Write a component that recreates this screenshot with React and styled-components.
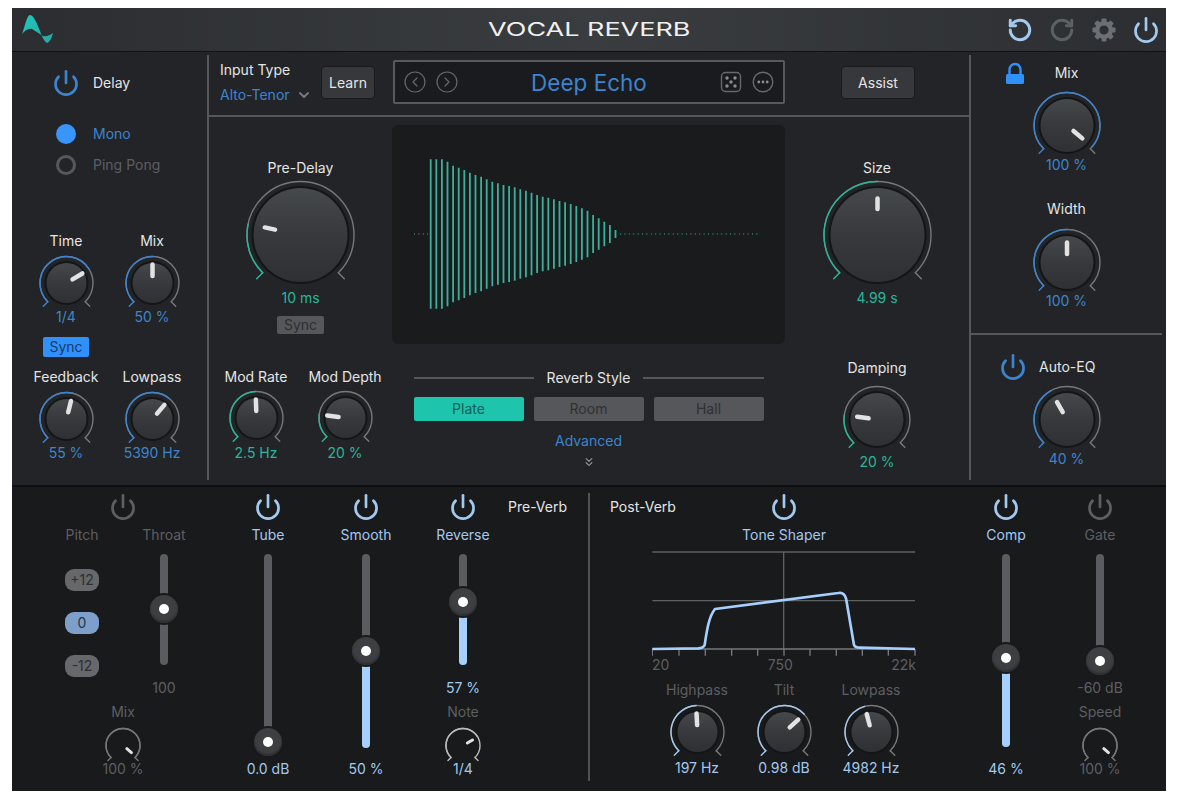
import React from 'react';
import styled, { createGlobalStyle } from 'styled-components';
import {
	ChevronDown,
	ChevronsDown,
	CircleChevronLeft,
	CircleChevronRight,
	Power,
	RotateCcw,
	RotateCw,
} from 'lucide-react';

const WHITE = '#e4e5e6';
const BLUE = '#3c84cf';
const TEAL = '#2bb59b';
const PALE = '#a3c9ee';
const DIM = '#5d5f62';
const TRACK = '#76787a';

const GlobalStyle = createGlobalStyle`
	html, body {
		margin: 0;
		background: #fff;
		font-family: Inter, "Liberation Sans", sans-serif;
	}
`;

const Plugin = styled.div`
	width: 1154px;
	height: 783px;
	margin: 8px 0 0 12px;
	display: flex;
	flex-direction: column;
	overflow: hidden;
	background: #232427;
`;

const Header = styled.header`
	height: 43px;
	flex: none;
	display: grid;
	grid-template-columns: 1fr auto 1fr;
	align-items: center;
	background: linear-gradient(90deg, #2b2d30 0%, #3a3d40 50%, #2c2e31 100%);
	border-bottom: 1px solid #101113;
`;

const Logo = styled.svg`
	width: 45px;
	height: 40px;
	margin-left: 3px;
`;

const Title = styled.h1`
	margin: 0;
	font-size: 19px;
	font-weight: 400;
	line-height: 24px;
	color: #f0f0f0;
	white-space: nowrap;
	transform: scaleX(1.42);
`;

const HeaderActions = styled.div`
	display: flex;
	justify-content: flex-end;
	gap: 14px;
	padding-right: 6px;
`;

const HeaderIcon = styled.div`
	width: 28px;
	height: 28px;
	display: flex;
	align-items: center;
	justify-content: center;
	color: ${(p) => p.$color};
`;

const TopSection = styled.section`
	height: 433px;
	flex: none;
	display: flex;
`;

const VDivider = styled.div`
	width: 2px;
	flex: none;
	margin: 3px 0 5px;
	background: #555759;
`;

const DelayPanel = styled.div`
	width: 195px;
	flex: none;
	padding-top: 17px;
	box-sizing: border-box;
`;

const ToggleRow = styled.div`
	display: flex;
	align-items: center;
	gap: ${(p) => p.$gap || 13}px;
	padding-left: ${(p) => p.$left || 40}px;
	margin-top: ${(p) => p.$mt || 0}px;
`;

const Text = styled.div`
	font-size: 14px;
	line-height: 16px;
	font-weight: 400;
	white-space: nowrap;
	color: ${(p) => p.$color || WHITE};
	margin-top: ${(p) => p.$mt || 0}px;
`;

const RadioGroup = styled.div`
	display: flex;
	flex-direction: column;
	gap: 11px;
	margin: 27px 0 0 44px;
`;

const RadioRow = styled.div`
	display: flex;
	align-items: center;
	gap: 17px;
`;

const RadioDot = styled.div`
	width: 20px;
	height: 20px;
	box-sizing: border-box;
	border-radius: 50%;
	background: ${(p) => (p.$on ? '#3a95fb' : 'transparent')};
	border: ${(p) => (p.$on ? 'none' : '3px solid #56585a')};
`;

const DelayGrid = styled.div`
	display: grid;
	grid-template-columns: 86px 86px;
	margin: 58px 0 0 11px;
`;

const Cell = styled.div`
	display: flex;
	flex-direction: column;
	align-items: center;
	margin-top: ${(p) => p.$mt || 0}px;
`;

const SyncChip = styled.div`
	width: ${(p) => (p.$on ? 46 : 47)}px;
	height: ${(p) => (p.$on ? 20 : 18)}px;
	margin-top: ${(p) => p.$mt}px;
	border-radius: 2px;
	text-align: center;
	font-size: 14px;
	line-height: ${(p) => (p.$on ? 20 : 18)}px;
	background: ${(p) => (p.$on ? '#3191fb' : '#55575a')};
	color: ${(p) => (p.$on ? '#153a68' : '#2d2f32')};
`;

const CenterPanel = styled.div`
	width: 760px;
	flex: none;
	display: flex;
	flex-direction: column;
`;

const TopBar = styled.div`
	height: 65px;
	box-sizing: border-box;
	flex: none;
	display: flex;
	align-items: center;
	padding: 0 0 3px 11px;
	border-bottom: 2px solid #555759;
`;

const InputBlock = styled.div`
	width: 101px;
	display: flex;
	flex-direction: column;
	gap: 9px;
`;

const InputValue = styled.div`
	display: flex;
	align-items: center;
	gap: 6px;
	color: #77797b;
`;

const PanelButton = styled.button`
	width: ${(p) => p.$width}px;
	height: 33px;
	flex: none;
	padding: 0;
	margin-left: ${(p) => p.$ml || 0}px;
	border: 1px solid #1a1b1d;
	border-radius: 4px;
	background: #36383b;
	color: ${WHITE};
	font-family: inherit;
	font-size: 14px;
	font-weight: 400;
`;

const PresetBox = styled.div`
	width: 392px;
	height: 44px;
	flex: none;
	box-sizing: border-box;
	margin-left: 18px;
	display: grid;
	grid-template-columns: 1fr auto 1fr;
	align-items: center;
	padding: 0 8px;
	background: #1a1b1e;
	border: 2px solid #58595b;
	border-radius: 2px;
`;

const PresetIcons = styled.div`
	display: flex;
	align-items: center;
	gap: 8px;
	color: #66686a;
	justify-content: ${(p) => (p.$end ? 'flex-end' : 'flex-start')};
`;

const PresetName = styled.div`
	font-size: 22.5px;
	line-height: 30px;
	padding-top: 2px;
	color: ${BLUE};
`;

const MainArea = styled.div`
	flex: 1;
	display: grid;
	grid-template-columns: 183px 393px 184px;
`;

const SideColumn = styled.div`
	display: flex;
	flex-direction: column;
	align-items: center;
	padding-top: 43px;
`;

const ModRow = styled.div`
	display: grid;
	grid-template-columns: 89px 89px;
	margin-top: 35px;
`;

const DisplayColumn = styled.div`
	display: flex;
	flex-direction: column;
	align-items: center;
	padding-top: 8px;
`;

const Display = styled.svg`
	width: 393px;
	height: 219px;
	flex: none;
	border-radius: 6px;
	background: #1a1b1d;
`;

const StyleHeading = styled.div`
	width: 350px;
	margin-top: 26px;
	display: flex;
	align-items: center;
	gap: 13px;
`;

const HeadingLine = styled.div`
	flex: 1;
	height: 2px;
	background: #555759;
`;

const StyleButtons = styled.div`
	width: 350px;
	margin-top: 11px;
	display: grid;
	grid-template-columns: repeat(3, 110px);
	gap: 10px;
`;

const StyleButton = styled.div`
	height: 24px;
	border-radius: 2px;
	text-align: center;
	font-size: 14px;
	line-height: 24px;
	background: ${(p) => (p.$on ? '#1ec4ac' : '#55575a')};
	color: ${(p) => (p.$on ? '#0f5f55' : '#2f3134')};
`;

const AdvancedIcon = styled.div`
	height: 14px;
	margin-top: 4px;
	color: #a2a4a6;
`;

const RightPanel = styled.div`
	width: 195px;
	flex: none;
	box-sizing: border-box;
	padding: 13px 4px 0 0;
	display: flex;
	flex-direction: column;
`;

const MixHeader = styled.div`
	display: grid;
	grid-template-columns: 1fr auto 1fr;
	grid-template-rows: 16px;
	align-items: center;
`;

const Lock = styled.svg`
	width: 18px;
	height: 22px;
	justify-self: end;
	margin-right: 31px;
`;

const HDivider = styled.div`
	height: 2px;
	margin-top: 24px;
	background: #555759;
`;

const BottomSection = styled.section`
	flex: 1;
	display: flex;
	padding-top: 6px;
	background: #191a1c;
	border-top: 2px solid #0d0e0f;
`;

const Strip = styled.div`
	width: ${(p) => p.$width || 90}px;
	flex: none;
	display: flex;
	flex-direction: column;
	align-items: center;
	margin-left: ${(p) => p.$ml || 0}px;
`;

const PowerBox = styled.div`
	width: 28px;
	height: 28px;
	flex: none;
	color: ${(p) => p.$color};
`;

const PitchRow = styled.div`
	display: grid;
	grid-template-columns: 82px 82px;
	margin-top: 6px;
`;

const PillStack = styled.div`
	display: flex;
	flex-direction: column;
	gap: 21px;
	margin-top: 26px;
`;

const Pill = styled.div`
	width: 34px;
	height: 22px;
	border-radius: 9px;
	text-align: center;
	font-size: 14px;
	line-height: 22px;
	background: ${(p) => (p.$on ? '#7d9fca' : '#66686b')};
	color: ${(p) => (p.$on ? '#2b3542' : '#2d2f31')};
`;

const SliderBody = styled.div`
	position: relative;
	width: 8px;
	height: ${(p) => p.$height}px;
	margin-top: 11px;
	border-radius: 4px;
	background: #5a5c5f;
`;

const SliderFill = styled.div`
	position: absolute;
	left: 0;
	right: 0;
	bottom: 0;
	border-radius: 0 0 4px 4px;
	background: #a6d0fb;
`;

const SliderThumb = styled.div`
	position: absolute;
	left: -10px;
	width: 28px;
	height: 28px;
	box-sizing: border-box;
	border-radius: 50%;
	background: #3d3f42;
	box-shadow: 0 0 0 2px #191a1c, inset 0 -2px 2px #2c2e30;
	&::after {
		content: '';
		position: absolute;
		left: 9px;
		top: 9px;
		width: 10px;
		height: 10px;
		border-radius: 50%;
		background: #fff;
	}
`;

const PreVerbLabel = styled(Text)`
	width: 60px;
	margin-top: 6px;
`;

const PostDivider = styled.div`
	width: 2px;
	height: 288px;
	flex: none;
	margin-left: 20px;
	background: #505254;
`;

const ToneStrip = styled.div`
	width: 348px;
	flex: none;
	margin-left: 20px;
	display: flex;
	flex-direction: column;
	align-items: center;
`;

const ToneHeader = styled.div`
	width: 100%;
	display: grid;
	grid-template-columns: 1fr auto 1fr;
	align-items: start;
`;

const PostVerbLabel = styled(Text)`
	margin-top: 6px;
`;

const ToneGraph = styled.svg`
	width: 264px;
	height: 106px;
	flex: none;
	margin-top: 8px;
`;

const AxisLabels = styled.div`
	width: 264px;
	display: flex;
	justify-content: space-between;
`;

const ToneKnobs = styled.div`
	display: grid;
	grid-template-columns: repeat(3, 87px);
	margin-top: 9px;
`;

const KnobSvg = styled.svg`
	display: block;
	overflow: visible;
`;

const SIZES = {
	xs: { r: 17, cap: 0, h: 33, inner: 5, outer: 11, stroke: 3, hook: 3 },
	sm: { r: 26.5, cap: 20, h: 51, inner: 7, outer: 18.5, stroke: 4.5, hook: 4.5 },
	md: { r: 33, cap: 26.5, h: 63, inner: 8.5, outer: 20, stroke: 4.5, hook: 4.5 },
	lg: { r: 53.5, cap: 47, h: 98, inner: 26, outer: 36.5, stroke: 4.5, hook: 6 },
};

const toPoint = (cx, cy, r, deg) => {
	const rad = (deg * Math.PI) / 180;
	return [cx + r * Math.sin(rad), cy - r * Math.cos(rad)];
};

const arcPath = (cx, cy, r, from, to) => {
	const [x1, y1] = toPoint(cx, cy, r, from);
	const [x2, y2] = toPoint(cx, cy, r, to);
	return `M${x1} ${y1}A${r} ${r} 0 ${to - from > 180 ? 1 : 0} 1 ${x2} ${y2}`;
};

function Knob({ size, angle, color, trackColor = TRACK }) {
	const { r, cap, h, inner, outer, stroke, hook } = SIZES[size];
	const cx = r + 3;
	const cy = r + 1.5;
	const [lx, ly] = toPoint(cx, cy, r, -135);
	const [rx, ry] = toPoint(cx, cy, r, 135);
	const [px1, py1] = toPoint(cx, cy, inner, angle);
	const [px2, py2] = toPoint(cx, cy, outer, angle);
	const gradId = `cap-${size}`;
	return (
		<KnobSvg width={cx * 2} height={h} viewBox={`0 0 ${cx * 2} ${h}`}>
			<defs>
				<linearGradient id={gradId} x1="0" y1="0" x2="0" y2="1">
					<stop offset="0" stopColor="#46494c" />
					<stop offset="0.5" stopColor="#37393c" />
					<stop offset="1" stopColor="#2e3033" />
				</linearGradient>
			</defs>
			<g fill="none" strokeWidth="1.4" strokeLinecap="round">
				<path d={arcPath(cx, cy, r, -135, 135)} stroke={trackColor} />
				<path
					d={`M${rx} ${ry}l${hook} ${hook}`}
					stroke={trackColor}
				/>
				<path d={arcPath(cx, cy, r, -135, angle)} stroke={color} />
				<path
					d={`M${lx} ${ly}l${-hook} ${hook}`}
					stroke={color}
				/>
			</g>
			{cap > 0 && (
				<>
					<circle cx={cx} cy={cy} r={cap + 2} fill="#141517" />
					<circle cx={cx} cy={cy} r={cap} fill={`url(#${gradId})`} />
				</>
			)}
			<line
				x1={px1}
				y1={py1}
				x2={px2}
				y2={py2}
				stroke="#e2e2e2"
				strokeWidth={stroke}
				strokeLinecap="round"
			/>
		</KnobSvg>
	);
}

function Dial({
	label,
	value,
	size = 'sm',
	angle,
	color,
	trackColor,
	labelColor,
	valueColor,
	mt,
	knobGap = 6,
	valueGap = 3,
}) {
	return (
		<Cell $mt={mt}>
			{label && <Text $color={labelColor}>{label}</Text>}
			<Cell $mt={knobGap}>
				<Knob
					size={size}
					angle={angle}
					color={color}
					trackColor={trackColor}
				/>
			</Cell>
			<Text $color={valueColor || color} $mt={valueGap}>
				{value}
			</Text>
		</Cell>
	);
}

function PowerIcon({ color }) {
	return (
		<PowerBox $color={color}>
			<Power size={28} strokeWidth={2.3} />
		</PowerBox>
	);
}

function Slider({ height, thumb, fill }) {
	return (
		<SliderBody $height={height}>
			{fill && <SliderFill style={{ height: height - thumb }} />}
			<SliderThumb style={{ top: thumb - 14 }} />
		</SliderBody>
	);
}

function DiceIcon() {
	return (
		<svg width="24" height="24" viewBox="0 0 24 24">
			<rect
				x="2.5"
				y="2.5"
				width="19"
				height="19"
				rx="4"
				fill="none"
				stroke="currentColor"
				strokeWidth="1.4"
			/>
			<g fill="#8a8c8e">
				<circle cx="8" cy="8" r="1.7" />
				<circle cx="16" cy="8" r="1.7" />
				<circle cx="12" cy="12" r="1.7" />
				<circle cx="8" cy="16" r="1.7" />
				<circle cx="16" cy="16" r="1.7" />
			</g>
		</svg>
	);
}

function MoreIcon() {
	return (
		<svg width="24" height="24" viewBox="0 0 24 24">
			<circle
				cx="12"
				cy="12"
				r="9.8"
				fill="none"
				stroke="currentColor"
				strokeWidth="1.4"
			/>
			<g fill="#8a8c8e">
				<circle cx="7.8" cy="12" r="1.4" />
				<circle cx="12" cy="12" r="1.4" />
				<circle cx="16.2" cy="12" r="1.4" />
			</g>
		</svg>
	);
}

const DECAY = [
	478, 478, 478, 485, 497, 503, 510, 518, 525, 530, 538, 545, 550, 555, 558,
	562, 568, 572, 578, 585, 590, 593, 598, 603, 607, 612, 618, 625, 632, 645,
	655, 665, 675, 690,
];

function Waveform() {
	return (
		<Display viewBox="0 0 393 219">
			<g stroke="#3bb09c" strokeWidth="1.8">
				{DECAY.map((z, i) => {
					const x = 38.7 + i * 5.6;
					const half = 234 - z / 3;
					return (
						<line
							key={i}
							x1={x}
							x2={x}
							y1={109 - half}
							y2={109 + half}
						/>
					);
				})}
			</g>
			<g stroke="#3bb09c" strokeWidth="1" strokeDasharray="1 3.4">
				<line x1="22" x2="36" y1="109" y2="109" />
				<line x1="228" x2="367" y1="109" y2="109" />
			</g>
		</Display>
	);
}

const TICKS = [157, 237, 316, 395, 473, 552, 630, 709, 787, 865, 945];

function ToneCurve() {
	return (
		<ToneGraph viewBox="156 198 792 318">
			<g stroke="#5e6062" strokeWidth="4" fill="none">
				<path d="M157 201H945M157 347H945M551 201V492" />
				<path d="M157 492H945" stroke="#77797b" />
				{TICKS.map((x) => (
					<path key={x} d={`M${x} 492V512`} stroke="#77797b" />
				))}
			</g>
			<path
				d="M157 492L295 490Q310 489 314 480C320 440 326 395 345 372L715 324Q732 320 738 340L762 480Q765 488 780 488L945 492"
				fill="none"
				stroke="#a6d0fb"
				strokeWidth="8"
				strokeLinejoin="round"
			/>
		</ToneGraph>
	);
}

function Gear() {
	return (
		<svg width="26" height="26" viewBox="0 0 26 26">
			<g fill="currentColor">
				{[0, 45, 90, 135, 180, 225, 270, 315].map((deg) => (
					<rect
						key={deg}
						x="10.6"
						y="1.5"
						width="4.8"
						height="6"
						rx="0.8"
						transform={`rotate(${deg} 13 13)`}
					/>
				))}
			</g>
			<circle
				cx="13"
				cy="13"
				r="6.8"
				fill="none"
				stroke="currentColor"
				strokeWidth="4.4"
			/>
		</svg>
	);
}

export default function App() {
	return (
		<Plugin>
			<GlobalStyle />
			<Header>
				<Logo viewBox="0 0 45 40">
					<defs>
						<linearGradient id="logoFill" x1="0" y1="0" x2="1" y2="1">
							<stop offset="0" stopColor="#20c6bf" />
							<stop offset="1" stopColor="#2aa79f" />
						</linearGradient>
					</defs>
					<path
						d="M7 24C10 16 12 5 15 5C19 5 22 14 25 21C27 27 29 31 32 33C35 32 37 27 38 23C35 25 32 27 28 26C24 24 21 21 17 19C13 18 10 21 7 24Z"
						fill="url(#logoFill)"
					/>
				</Logo>
				<Title>VOCAL REVERB</Title>
				<HeaderActions>
					<HeaderIcon $color={PALE}>
						<RotateCcw size={26} strokeWidth={2.7} />
					</HeaderIcon>
					<HeaderIcon $color="#5b6063">
						<RotateCw size={26} strokeWidth={2.7} />
					</HeaderIcon>
					<HeaderIcon $color="#6b7074">
						<Gear />
					</HeaderIcon>
					<HeaderIcon $color={PALE}>
						<Power size={28} strokeWidth={2.3} />
					</HeaderIcon>
				</HeaderActions>
			</Header>

			<TopSection>
				<DelayPanel>
					<ToggleRow>
						<PowerIcon color={BLUE} />
						<Text>Delay</Text>
					</ToggleRow>
					<RadioGroup>
						<RadioRow>
							<RadioDot $on />
							<Text $color={BLUE}>Mono</Text>
						</RadioRow>
						<RadioRow>
							<RadioDot />
							<Text $color={DIM}>Ping Pong</Text>
						</RadioRow>
					</RadioGroup>
					<DelayGrid>
						<Cell>
							<Dial label="Time" value="1/4" angle={59} color={BLUE} />
							<SyncChip $on $mt={12}>
								Sync
							</SyncChip>
						</Cell>
						<Dial label="Mix" value="50 %" angle={0} color={BLUE} />
						<Dial
							label="Feedback"
							value="55 %"
							angle={14}
							color={BLUE}
							mt={12}
						/>
						<Dial
							label="Lowpass"
							value="5390 Hz"
							angle={40}
							color={BLUE}
							mt={12}
						/>
					</DelayGrid>
				</DelayPanel>
				<VDivider />
				<CenterPanel>
					<TopBar>
						<InputBlock>
							<Text>Input Type</Text>
							<InputValue>
								<Text $color={BLUE}>Alto-Tenor</Text>
								<ChevronDown size={16} strokeWidth={2.8} />
							</InputValue>
						</InputBlock>
						<PanelButton $width={54}>Learn</PanelButton>
						<PresetBox>
							<PresetIcons>
								<CircleChevronLeft size={24} strokeWidth={1.2} />
								<CircleChevronRight size={24} strokeWidth={1.2} />
							</PresetIcons>
							<PresetName>Deep Echo</PresetName>
							<PresetIcons $end>
								<DiceIcon />
								<MoreIcon />
							</PresetIcons>
						</PresetBox>
						<PanelButton $width={74} $ml={56}>
							Assist
						</PanelButton>
					</TopBar>
					<MainArea>
						<SideColumn>
							<Dial
								label="Pre-Delay"
								value="10 ms"
								size="lg"
								angle={-78}
								color={TEAL}
								knobGap={4}
								valueGap={12}
							/>
							<SyncChip $mt={10}>Sync</SyncChip>
							<ModRow>
								<Dial
									label="Mod Rate"
									value="2.5 Hz"
									angle={-2}
									color={TEAL}
									knobGap={5}
									valueGap={4}
								/>
								<Dial
									label="Mod Depth"
									value="20 %"
									angle={-82}
									color={TEAL}
									knobGap={5}
									valueGap={4}
								/>
							</ModRow>
						</SideColumn>
						<DisplayColumn>
							<Waveform />
							<StyleHeading>
								<HeadingLine />
								<Text>Reverb Style</Text>
								<HeadingLine />
							</StyleHeading>
							<StyleButtons>
								<StyleButton $on>Plate</StyleButton>
								<StyleButton>Room</StyleButton>
								<StyleButton>Hall</StyleButton>
							</StyleButtons>
							<Text $color={BLUE} $mt={12}>
								Advanced
							</Text>
							<AdvancedIcon>
								<ChevronsDown size={14} strokeWidth={1.8} />
							</AdvancedIcon>
						</DisplayColumn>
						<SideColumn>
							<Dial
								label="Size"
								value="4.99 s"
								size="lg"
								angle={0}
								color={TEAL}
								knobGap={4}
								valueGap={12}
							/>
							<Dial
								label="Damping"
								value="20 %"
								size="md"
								angle={-82}
								color={TEAL}
								mt={54}
								knobGap={8.5}
								valueGap={6.5}
							/>
						</SideColumn>
					</MainArea>
				</CenterPanel>
				<VDivider />
				<RightPanel>
					<MixHeader>
						<Lock viewBox="0 0 18 22">
							<path
								d="M3.5 12.5V7.5a5.5 5.5 0 0 1 11 0v5"
								fill="none"
								stroke="#3191fb"
								strokeWidth="2.4"
							/>
							<rect y="12" width="18" height="10" rx="1.5" fill="#3191fb" />
						</Lock>
						<Text>Mix</Text>
					</MixHeader>
					<Dial
						value="100 %"
						size="md"
						angle={130}
						color={BLUE}
						knobGap={9.5}
						valueGap={3.5}
					/>
					<Dial
						label="Width"
						value="100 %"
						size="md"
						angle={0}
						color={BLUE}
						mt={28}
						knobGap={10.5}
						valueGap={2.5}
					/>
					<HDivider />
					<ToggleRow $left={28} $gap={12} $mt={18}>
						<PowerIcon color={BLUE} />
						<Text>Auto-EQ</Text>
					</ToggleRow>
					<Dial
						value="40 %"
						size="md"
						angle={-30}
						color={BLUE}
						knobGap={3.5}
						valueGap={3.5}
					/>
				</RightPanel>
			</TopSection>

			<BottomSection>
				<Strip $width={164} $ml={29}>
					<PowerIcon color={DIM} />
					<PitchRow>
						<Cell>
							<Text $color={DIM}>Pitch</Text>
							<PillStack>
								<Pill>+12</Pill>
								<Pill $on>0</Pill>
								<Pill>-12</Pill>
							</PillStack>
						</Cell>
						<Cell>
							<Text $color={DIM}>Throat</Text>
							<Slider height={111} thumb={55} />
							<Text $color={DIM} $mt={15}>
								100
							</Text>
						</Cell>
					</PitchRow>
					<Dial
						label="Mix"
						value="100 %"
						size="xs"
						angle={130}
						color={TRACK}
						labelColor={DIM}
						valueColor={DIM}
						mt={8}
						knobGap={6.5}
						valueGap={1.5}
					/>
				</Strip>
				<Strip $ml={18}>
					<PowerIcon color={PALE} />
					<Text $color={PALE} $mt={6}>
						Tube
					</Text>
					<Slider height={194} thumb={188} />
					<Text $color={PALE} $mt={13}>
						0.0 dB
					</Text>
				</Strip>
				<Strip $ml={8}>
					<PowerIcon color={PALE} />
					<Text $color={PALE} $mt={6}>
						Smooth
					</Text>
					<Slider height={194} thumb={97} fill />
					<Text $color={PALE} $mt={13}>
						50 %
					</Text>
				</Strip>
				<Strip $ml={7}>
					<PowerIcon color={PALE} />
					<Text $color={PALE} $mt={6}>
						Reverse
					</Text>
					<Slider height={111} thumb={48} fill />
					<Text $color={PALE} $mt={15}>
						57 %
					</Text>
					<Dial
						label="Note"
						value="1/4"
						size="xs"
						angle={60}
						color="#b9bbbd"
						trackColor="#b9bbbd"
						labelColor={DIM}
						valueColor={PALE}
						mt={8}
						knobGap={6.5}
						valueGap={1.5}
					/>
				</Strip>
				<PreVerbLabel>Pre-Verb</PreVerbLabel>
				<PostDivider />
				<ToneStrip>
					<ToneHeader>
						<PostVerbLabel>Post-Verb</PostVerbLabel>
						<PowerIcon color={PALE} />
					</ToneHeader>
					<Text $color={PALE} $mt={6}>
						Tone Shaper
					</Text>
					<ToneCurve />
					<AxisLabels>
						<Text $color={DIM}>20</Text>
						<Text $color={DIM}>750</Text>
						<Text $color={DIM}>22k</Text>
					</AxisLabels>
					<ToneKnobs>
						<Dial
							label="Highpass"
							value="197 Hz"
							angle={-3}
							color={PALE}
							labelColor={DIM}
							valueGap={5}
						/>
						<Dial
							label="Tilt"
							value="0.98 dB"
							angle={48}
							color={PALE}
							labelColor={DIM}
							valueGap={5}
						/>
						<Dial
							label="Lowpass"
							value="4982 Hz"
							angle={-15}
							color={PALE}
							labelColor={DIM}
							valueGap={5}
						/>
					</ToneKnobs>
				</ToneStrip>
				<Strip $ml={3}>
					<PowerIcon color={PALE} />
					<Text $color={PALE} $mt={6}>
						Comp
					</Text>
					<Slider height={193} thumb={104} fill />
					<Text $color={PALE} $mt={14}>
						46 %
					</Text>
				</Strip>
				<Strip $ml={4}>
					<PowerIcon color={DIM} />
					<Text $color={DIM} $mt={6}>
						Gate
					</Text>
					<Slider height={111} thumb={107} />
					<Text $color={DIM} $mt={15}>
						-60 dB
					</Text>
					<Dial
						label="Speed"
						value="100 %"
						size="xs"
						angle={130}
						color={TRACK}
						labelColor={DIM}
						valueColor={DIM}
						mt={8}
						knobGap={6.5}
						valueGap={1.5}
					/>
				</Strip>
			</BottomSection>
		</Plugin>
	);
}
